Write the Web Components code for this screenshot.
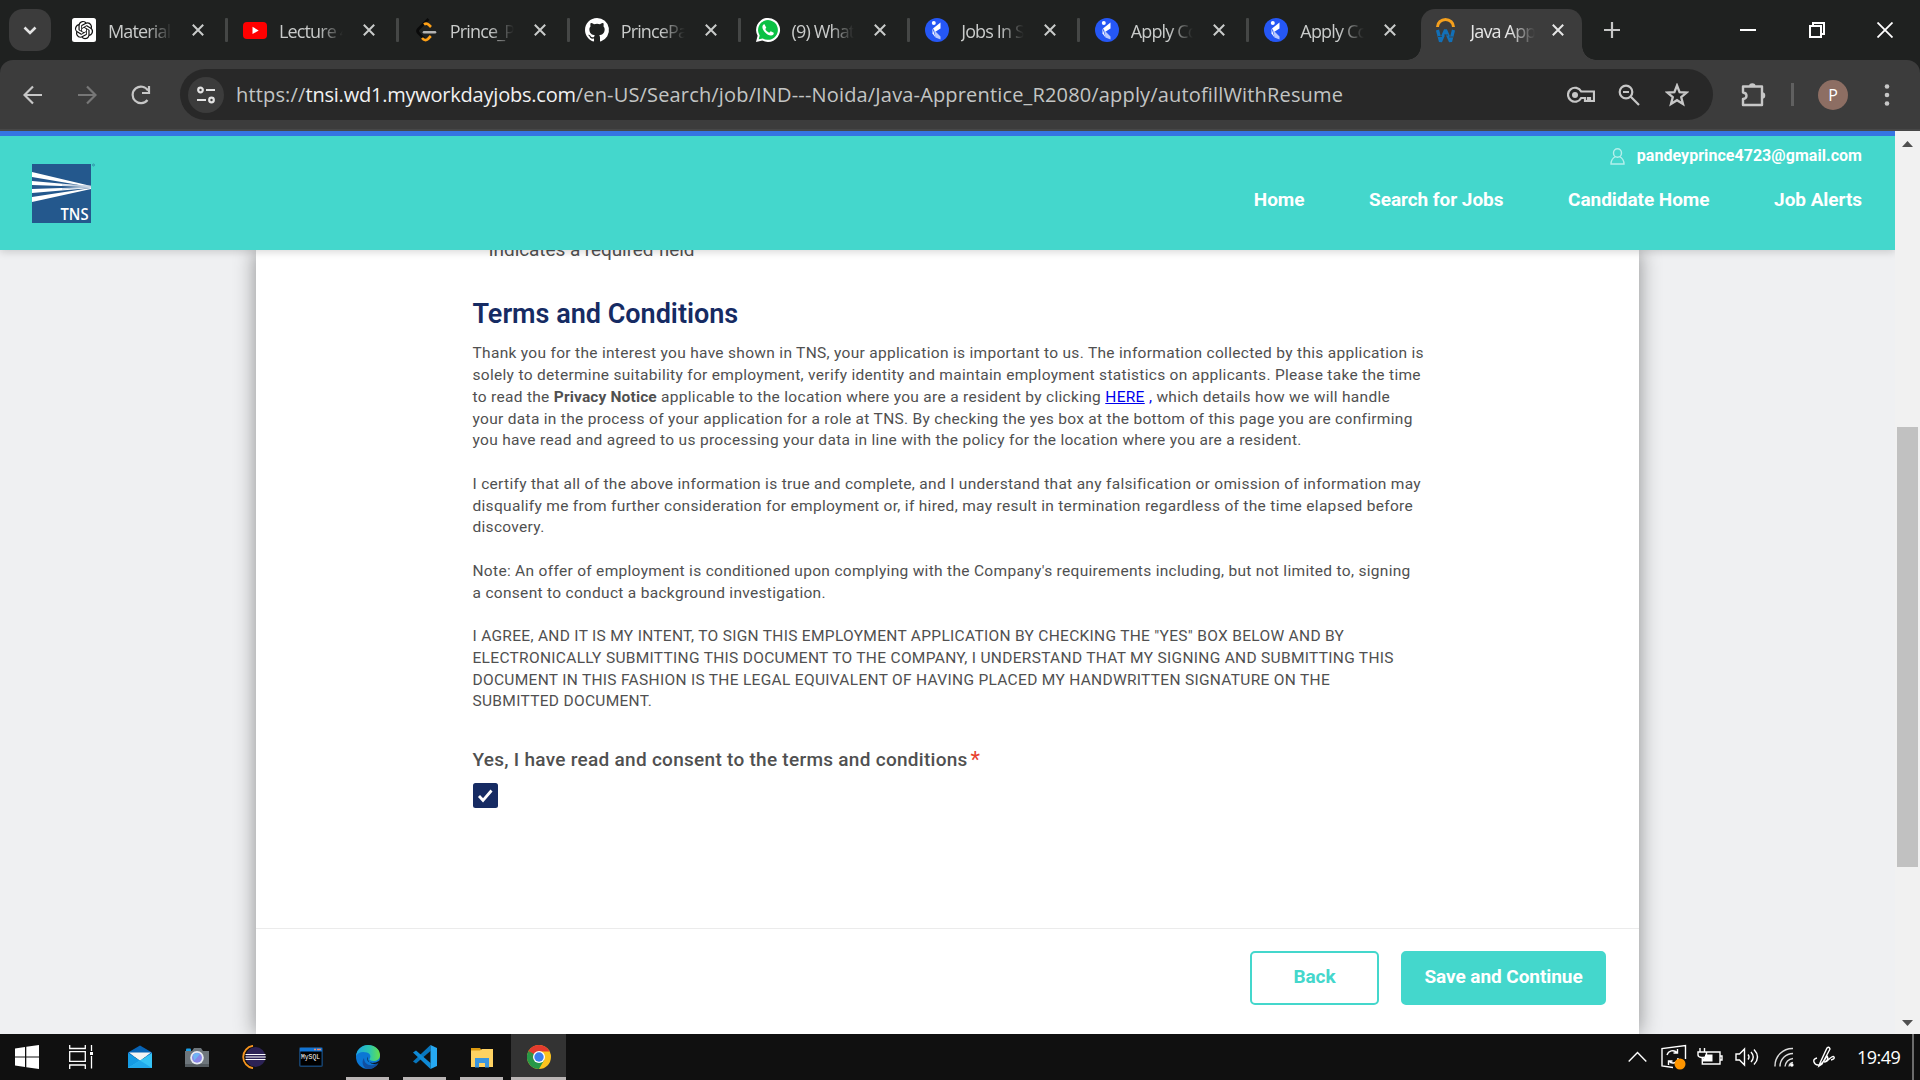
<!DOCTYPE html>
<html lang="en">
<head>
<meta charset="utf-8">
<title>Java Apprentice</title>
<style>
html,body{margin:0;height:100%;overflow:hidden}
body{display:flex;flex-direction:column;width:1920px;height:1080px;font-family:"Open Sans","Noto Sans",sans-serif}
</style>
</head>
<body>
<chrome-window></chrome-window>
<job-page></job-page>
<win-taskbar></win-taskbar>
<script>
const mk=(name,html,after)=>customElements.define(name,class extends HTMLElement{
  connectedCallback(){
    if(this.shadowRoot)return;
    const r=this.attachShadow({mode:'open'});
    const t=document.createElement('template');
    t.innerHTML=html;
    r.appendChild(t.content.cloneNode(true));
    if(after)after(this,r);
  }
});

const apna='<circle cx="12" cy="12" r="12" fill="#2557f5"/><circle cx="8.800" cy="5" r="2" fill="#fff"/><path d="M15.500 4.500v6l-5.500 3.500-2-3.500z" fill="#fff"/><path d="M9 12l6.500 6.500v3l-5-2z" fill="#b9c9ff"/><path d="M7.500 10.500l3 9-3-4z" fill="#fff"/>';
const fav={
 gpt:'<rect width="24" height="24" rx="2.500" fill="#fff"/><path transform="translate(2.900 2.900) scale(.76)" fill="#111" d="M22.2819 9.8211a5.9847 5.9847 0 0 0-.5157-4.9108 6.0462 6.0462 0 0 0-6.5098-2.9A6.0651 6.0651 0 0 0 4.9807 4.1818a5.9847 5.9847 0 0 0-3.9977 2.9 6.0462 6.0462 0 0 0 .7427 7.0966 5.98 5.98 0 0 0 .511 4.9107 6.051 6.051 0 0 0 6.5146 2.9001A5.9847 5.9847 0 0 0 13.2599 24a6.0557 6.0557 0 0 0 5.7718-4.2058 5.9894 5.9894 0 0 0 3.9977-2.9001 6.0557 6.0557 0 0 0-.7475-7.0729zm-9.022 12.6081a4.4755 4.4755 0 0 1-2.8764-1.0408l.1419-.0804 4.7783-2.7582a.7948.7948 0 0 0 .3927-.6813v-6.7369l2.02 1.1686a.071.071 0 0 1 .038.052v5.5826a4.504 4.504 0 0 1-4.4945 4.4944zm-9.6607-4.1254a4.4708 4.4708 0 0 1-.5346-3.0137l.142.0852 4.783 2.7582a.7712.7712 0 0 0 .7806 0l5.8428-3.3685v2.3324a.0804.0804 0 0 1-.0332.0615L9.74 19.9502a4.4992 4.4992 0 0 1-6.1408-1.6464zM2.3408 7.8956a4.485 4.485 0 0 1 2.3655-1.9728V11.6a.7664.7664 0 0 0 .3879.6765l5.8144 3.3543-2.0201 1.1685a.0757.0757 0 0 1-.071 0l-4.8303-2.7865A4.504 4.504 0 0 1 2.3408 7.872zm16.5963 3.8558L13.1038 8.364 15.1192 7.2a.0757.0757 0 0 1 .071 0l4.8303 2.7913a4.4944 4.4944 0 0 1-.6765 8.1042v-5.6772a.79.79 0 0 0-.407-.667zm2.0107-3.0231l-.142-.0852-4.7735-2.7818a.7759.7759 0 0 0-.7854 0L9.409 9.2297V6.8974a.0662.0662 0 0 1 .0284-.0615l4.8303-2.7866a4.4992 4.4992 0 0 1 6.6802 4.66zM8.3065 12.863l-2.02-1.1638a.0804.0804 0 0 1-.038-.0567V6.0742a4.4992 4.4992 0 0 1 7.3757-3.4537l-.142.0805L8.704 5.459a.7948.7948 0 0 0-.3927.6813zm1.0976-2.3654l2.602-1.4998 2.6069 1.4998v2.9994l-2.5974 1.4997-2.6067-1.4997Z"/>',
 yt:'<rect x="0" y="4" width="24" height="17" rx="4" fill="#f00"/><path d="M9.500 8.800v7.200l6.200-3.600z" fill="#fff"/>',
 lc:'<path d="M14.500 1L4.500 11q-2 2 0 4l6 6.200" fill="none" stroke="#0a0a0a" stroke-width="2.600"/><path d="M10 6.500q2.500-2 5 .5l2 2M8 20q3 3.600 6 1l2.800-3" fill="none" stroke="#ffa116" stroke-width="2.600"/><path d="M10 14.300h11" stroke="#b3b3b3" stroke-width="2.600" stroke-linecap="round"/>',
 gh:'<path fill="#fff" d="M12 0C5.370 0 0 5.370 0 12c0 5.310 3.440 9.800 8.200 11.390.6.110.82-.26.82-.58v-2.230c-3.340.73-4.030-1.420-4.030-1.420-.55-1.390-1.340-1.760-1.340-1.760-1.080-.74.090-.73.090-.73 1.200.090 1.840 1.240 1.840 1.240 1.070 1.830 2.800 1.300 3.490 1 .1-.78.420-1.310.76-1.610-2.670-.3-5.470-1.330-5.470-5.930 0-1.310.47-2.380 1.240-3.220-.13-.3-.54-1.520.1-3.180 0 0 1.010-.32 3.300 1.230a11.500 11.500 0 0 1 6.020 0c2.280-1.550 3.290-1.230 3.290-1.230.64 1.660.24 2.880.12 3.180.77.840 1.230 1.910 1.230 3.220 0 4.610-2.800 5.620-5.480 5.920.42.360.81 1.100.81 2.220v3.290c0 .32.190.7.800.58A12 12 0 0 0 12 0"/>',
 wa:'<path d="M0 24l1.600-6.200A12 12 0 1 1 6.400 22.500z" fill="#fff"/><path d="M2.700 21.300l1-3.900a9.900 9.900 0 1 1 3.100 3z" fill="#0bc144"/><path d="M8.500 6.200c-.8-.3-2.100.9-2.100 2.700 0 3.300 4.700 8.600 8.600 8.600 1.900 0 3.100-1.300 2.700-2.700l-3-1.500-1.500 1.500c-1.600-.5-3.300-2.200-3.900-3.700l1-1.400z" fill="#fff"/>',
 ap:apna,
 wd:'<path d="M1.500 9a8 7.500 0 0 1 16 0" fill="none" stroke="#f5a01d" stroke-width="3"/><path d="M1.500 12l3 11.500 5-11.500 5 11.500 3-11.500" fill="none" stroke="#1270b8" stroke-width="3.200" stroke-linejoin="bevel"/><path d="M2 18.500h4M8 17h4M13 19h4" stroke="#3c3c3c" stroke-width=".8"/>'
};

mk('browser-tab',`<style>
:host{display:flex;align-items:center;width:170.900px;height:60px;box-sizing:border-box;color:#c9cbca;position:relative;flex:none}
:host([narrow]){width:169.600px}
svg.f{width:24px;height:24px;margin-left:15px;flex:none;overflow:visible}
.t{width:65px;margin-left:12px;overflow:hidden;white-space:nowrap;font-size:18px;letter-spacing:-.85px;line-height:26px;margin-top:2px;-webkit-mask-image:linear-gradient(90deg,#000 62%,transparent)}
.x{width:12px;height:12px;margin-left:20px;flex:none}
.s{width:3px;height:24px;background:#454746;border-radius:1px;margin-left:21px}
:host([last]) .s{visibility:hidden}
:host([active]){height:51px;margin-top:9px;width:161px;background:#3c3c3c;border-radius:14px 14px 0 0;color:#e6e6e6;padding-bottom:9px;margin-left:1px}
:host([active]) .s{display:none}
:host([active]) .t{margin-left:10px}
:host([active]) .x{margin-left:17px}
:host([active])::before,:host([active])::after{content:"";position:absolute;bottom:0;width:14px;height:14px}
:host([active])::before{left:-14px;background:radial-gradient(circle at 0 0,transparent 13.500px,#3c3c3c 14px)}
:host([active])::after{right:-14px;background:radial-gradient(circle at 100% 0,transparent 13.500px,#3c3c3c 14px)}
</style><svg class="f" viewBox="0 0 24 24"></svg><div class="t"><slot></slot></div>
<svg class="x" viewBox="0 0 12 12"><path d="M.8.8l10.400 10.400M11.200.8L.8 11.200" stroke="currentColor" stroke-width="2"/></svg><div class="s"></div>`,
(h,r)=>{r.querySelector('.f').innerHTML=fav[h.getAttribute('icon')]});

mk('tab-strip',`<style>
:host{display:flex;height:60px;background:#1f2120;align-items:center}
.d{width:42px;height:42px;border-radius:14px;background:#3c3c3c;margin-left:9px;margin-right:6px;display:flex;align-items:center;justify-content:center;flex:none}
.p{margin-left:22px;width:16px;height:16px;flex:none}
.w{display:flex;margin-left:auto;align-items:center;padding-right:27px;gap:52.500px}
svg{display:block}
</style>
<div class="d"><svg width="14" height="9" viewBox="0 0 14 9"><path d="M1.500 1.500L7 7l5.500-5.500" stroke="#e3e3e3" stroke-width="2.600" fill="none"/></svg></div>
<browser-tab icon="gpt">Material Design</browser-tab><browser-tab icon="yt">Lecture 4 -</browser-tab><browser-tab icon="lc">Prince_Pandey</browser-tab><browser-tab icon="gh">PrincePandey</browser-tab><browser-tab icon="wa" narrow>(9) WhatsApp</browser-tab><browser-tab icon="ap" narrow>Jobs In Sales</browser-tab><browser-tab icon="ap" narrow>Apply Conte</browser-tab><browser-tab icon="ap" narrow last style="width:171px">Apply Conte</browser-tab><browser-tab icon="wd" active>Java Apprentice</browser-tab>
<svg class="p" viewBox="0 0 16 16"><path d="M8 0v16M0 8h16" stroke="#c7c7c7" stroke-width="2.200"/></svg>
<div class="w"><svg width="16" height="16"><path d="M0 8h16" stroke="#fff" stroke-width="2"/></svg>
<svg width="16" height="16" viewBox="0 0 16 16"><path d="M1 4h11v11H1zM4 4V1h11v11h-3" fill="none" stroke="#fff" stroke-width="2"/></svg>
<svg width="16" height="16" viewBox="0 0 16 16"><path d="M.5.5l15 15M15.500.5l-15 15" stroke="#fff" stroke-width="1.800"/></svg></div>`);

mk('address-bar',`<style>
:host{display:flex;height:71px;box-sizing:border-box;align-items:center;background:#3c3c3c;border-bottom:2px solid #474747;border-radius:13px 13px 0 0;color:#c7c7c7}
svg{display:block;flex:none;fill:none;stroke:currentColor;stroke-width:2.200}
.n{display:flex;align-items:center;gap:34px;padding-left:23px;width:157px;box-sizing:content-box}
.o{display:flex;align-items:center;width:1533px;height:51px;border-radius:26px;background:#282828;flex:none}
.c{width:36px;height:36px;border-radius:50%;background:#3c3c3c;margin-left:8px;display:flex;align-items:center;justify-content:center;color:#e3e3e3;flex:none}
.u{margin-left:12px;font-size:20px;white-space:nowrap;color:#c3c5c4;letter-spacing:.16px;line-height:30px}
.u b{font-weight:400;color:#f1f1f1;letter-spacing:-.22px}
.i{display:flex;align-items:center;gap:23px;margin-left:auto;padding-right:24px}
.e{display:flex;align-items:center;margin-left:28px}
.a{width:30px;height:30px;border-radius:50%;background:#8d6e63;color:#fff;text-align:center;font-size:16px;line-height:30px;margin-left:24px}
.l{width:3px;height:23px;background:#606060;margin-left:25px}
</style>
<div class="n"><svg width="20" height="20" viewBox="0 0 20 20"><path d="M19 10H2M10 1.500L1.500 10l8.500 8.500"/></svg>
<svg width="20" height="20" viewBox="0 0 20 20" style="color:#777"><path d="M1 10h17M10 1.500l8.500 8.500-8.500 8.500"/></svg>
<svg width="20" height="20" viewBox="0 0 20 20"><path d="M16.500 15A8.300 8.300 0 1 1 17 5.500M18 1v7h-7"/></svg></div>
<div class="o"><div class="c"><svg width="18" height="18" viewBox="0 0 18 18"><circle cx="3.500" cy="4" r="2.300"/><path d="M9 4h9M0 14h9"/><circle cx="14.500" cy="14" r="2.300"/></svg></div>
<div class="u">https://<b>tnsi.wd1.myworkdayjobs.com</b>/en-US/Search/job/IND---Noida/Java-Apprentice_R2080/apply/autofillWithResume</div>
<div class="i"><svg width="28" height="18" viewBox="0 0 28 18"><path d="M14.200 5.500A7 7 0 1 0 14.200 12H18v3h3v-3h2v3h4V5.500z"/><circle cx="8" cy="9" r="3" fill="currentColor" stroke="none"/></svg>
<svg width="22" height="22" viewBox="0 0 22 22"><circle cx="8" cy="8" r="6.300"/><path d="M12.800 12.800L21 21M5 8h6"/></svg>
<svg width="24" height="24" viewBox="0 0 24 24" style="margin-left:2px"><path d="M12 2.500l2.600 6.700 7 .4-5.400 4.500 1.800 6.900-6-3.800-6 3.800 1.800-6.900L2.400 9.600l7-.4z" stroke-width="2.300"/></svg></div></div>
<div class="e"><svg width="25" height="25" viewBox="0 0 25 25"><path d="M2 4.500h19V23H2v-6q3.500-.5 3.500-3.300T2 10.500z" stroke-linejoin="round" stroke-width="2.400"/><path d="M8 4.500a3.300 3.300 0 0 1 6.600 0zM21 10.300a3.200 3.200 0 0 1 0 6.500z" fill="currentColor" stroke="none"/></svg><div class="l"></div><div class="a">P</div>
<svg width="6" height="22" viewBox="0 0 6 22" style="margin-left:36px"><g fill="currentColor" stroke="none"><circle cx="3" cy="2.500" r="2.300"/><circle cx="3" cy="11" r="2.300"/><circle cx="3" cy="19.500" r="2.300"/></g></svg></div>`);

mk('chrome-window',`<style>:host{display:flex;flex-direction:column;height:131px;flex:none;background:#1f2120}</style><tab-strip></tab-strip><address-bar></address-bar>`);

mk('tns-logo',`<style>:host{display:block;width:63px;height:59px}svg{display:block;overflow:visible}</style>
<svg width="63" height="59" viewBox="0 0 63 59"><rect width="59" height="59" fill="#24588d"/><g fill="#fff"><path d="M0 8v5l59 10v-1zM0 17v4l59 2v-.8zM0 25v4l59-5v-1zM0 33v5l59-13v-1z"/></g><path d="M30 21l29 1M30 25l29-2" stroke="#a9bdd3" stroke-width=".8"/><text x="28.500" y="56" font-family="Open Sans,sans-serif" font-size="17" font-weight="600" fill="#fff" textLength="28" lengthAdjust="spacingAndGlyphs">TNS</text><circle cx="61.500" cy="1" r="1" fill="none" stroke="#24588d" stroke-width=".5"/></svg>`);

mk('site-header',`<style>
:host{display:flex;height:119px;box-sizing:border-box;border-top:5px solid #3574e2;background:#44d7cc;box-shadow:0 2px 8px rgba(0,0,0,.16);padding:28px 33px 0 32px;justify-content:space-between;color:#fff;font-family:Roboto,sans-serif;font-weight:700;position:relative;z-index:2}
.r{display:flex;flex-direction:column;align-items:flex-end;margin-top:-18px}
.m{display:flex;align-items:center;gap:12px;font-size:16px;line-height:20px;letter-spacing:.04px}
nav{display:flex;gap:64.600px;font-size:19px;line-height:24px;margin-top:22px;letter-spacing:-.05px}
</style><tns-logo></tns-logo><div class="r"><div class="m"><svg width="15" height="17" viewBox="0 0 15 17" fill="none" stroke="#b4efeb" stroke-width="1.400"><ellipse cx="7.500" cy="5" rx="4" ry="4.300"/><path d="M5.500 8.500Q1 11 1 16h13q0-5-4.500-7.500"/></svg><span>pandeyprince4723@gmail.com</span></div>
<nav><span>Home</span><span>Search for Jobs</span><span>Candidate Home</span><span>Job Alerts</span></nav></div>`);

mk('terms-text',`<style>
:host{display:block;font-size:15.500px;line-height:21.740px;color:#505050;white-space:nowrap;letter-spacing:.305px}
p{margin:0 0 21.740px}a,i{color:#00e;font-style:normal}b{letter-spacing:.15px}
h2{font-size:27px;line-height:32px;font-weight:600;color:#162b63;margin:0 0 13.700px;letter-spacing:0}
</style><h2>Terms and Conditions</h2>
<p>Thank you for the interest you have shown in TNS, your application is important to us. The information collected by this application is<br>solely to determine suitability for employment, verify identity and maintain employment statistics on applicants. Please take the time<br>to read the <b>Privacy Notice</b> applicable to the location where you are a resident by clicking <a href="#">HERE</a><i> ,</i> which details how we will handle<br>your data in the process of your application for a role at TNS. By checking the yes box at the bottom of this page you are confirming<br>you have read and agreed to us processing your data in line with the policy for the location where you are a resident.</p>
<p>I certify that all of the above information is true and complete, and I understand that any falsification or omission of information may<br>disqualify me from further consideration for employment or, if hired, may result in termination regardless of the time elapsed before<br>discovery.</p>
<p>Note: An offer of employment is conditioned upon complying with the Company's requirements including, but not limited to, signing<br>a consent to conduct a background investigation.</p>
<p>I AGREE, AND IT IS MY INTENT, TO SIGN THIS EMPLOYMENT APPLICATION BY CHECKING THE "YES" BOX BELOW AND BY<br>ELECTRONICALLY SUBMITTING THIS DOCUMENT TO THE COMPANY, I UNDERSTAND THAT MY SIGNING AND SUBMITTING THIS<br>DOCUMENT IN THIS FASHION IS THE LEGAL EQUIVALENT OF HAVING PLACED MY HANDWRITTEN SIGNATURE ON THE<br>SUBMITTED DOCUMENT.</p>`);

mk('consent-field',`<style>
:host{display:block;padding-top:13px}
.l{font-size:19px;font-weight:500;color:#505050;line-height:24px;letter-spacing:.28px;white-space:nowrap;display:flex;gap:3px}
.l i{color:#e8422f;font-style:normal;font-size:22px;font-weight:400}
.c{width:25px;height:25px;background:#162b63;border-radius:2.500px;margin-top:11px}
svg{display:block}
</style><div class="l"><span>Yes, I have read and consent to the terms and conditions</span><i>*</i></div>
<div class="c"><svg width="25" height="25" viewBox="0 0 25 25"><path d="M6 13l4 4.300L18.500 7.500" fill="none" stroke="#fff" stroke-width="2.800"/></svg></div>`);

mk('page-button',`<style>
:host{display:flex;box-sizing:border-box;height:54px;width:129px;border:2px solid #44d7cc;border-radius:5px;align-items:center;justify-content:center;font-weight:700;font-size:19px;color:#44d7cc;padding-bottom:3px;letter-spacing:-.06px}
:host([primary]){background:#44d7cc;color:#fff;width:205px}
</style><slot></slot>`);

mk('form-card',`<style>
:host{display:flex;flex-direction:column;width:1383px;height:784px;background:#fff;margin-left:256px;box-shadow:0 0 20px rgba(0,0,0,.42);box-sizing:border-box;font-family:Roboto,sans-serif}
.b{padding:0 216.500px;height:678px;box-sizing:border-box}
.q{font-size:19px;line-height:24px;margin-top:-12px;color:#505050;margin-bottom:35.800px;letter-spacing:-.07px;display:flex}
.q span{width:16px;margin-top:-5px}
.f{border-top:1px solid #ebebeb;display:flex;justify-content:flex-end;gap:22px;padding:22px 33px}
</style><div class="b"><div class="q"><span>*</span>Indicates a required field</div><terms-text></terms-text><consent-field></consent-field></div>
<div class="f"><page-button>Back</page-button><page-button primary>Save and Continue</page-button></div>`);

mk('scroll-bar',`<style>
:host{display:flex;flex-direction:column;align-items:center;width:25px;background:#f1f1f1;flex:none}
svg{display:block}.t{width:21px;height:440px;background:#c1c1c1;margin-top:280px}
.d{margin-top:auto;margin-bottom:8px}.u{margin-top:10px}
</style><svg class="u" width="11" height="6"><path d="M0 6L5.500 0 11 6z" fill="#505050"/></svg><div class="t"></div><svg class="d" width="11" height="6"><path d="M0 0l5.500 6L11 0z" fill="#505050"/></svg>`);

mk('job-page',`<style>
:host{display:flex;height:903px;flex:none}
main{width:1895px;height:903px;background:#eff0f2;overflow:hidden;flex:none}
</style><main><site-header></site-header><form-card></form-card></main><scroll-bar></scroll-bar>`);

mk('task-icon',`<style>
:host{display:flex;width:57px;height:46px;box-sizing:border-box;align-items:center;justify-content:center;flex:none;position:relative}
::slotted(svg){display:block;width:24px;height:24px}
:host([open])::after{content:"";position:absolute;left:7px;right:7px;bottom:0;height:3px;background:#bab5b5}
:host([active]){background:#333}
:host([active])::after{left:0;right:0}
</style><slot></slot>`);

mk('win-taskbar',`<style>
:host{display:flex;height:46px;background:#101010;flex:none;align-items:center;color:#fff}
.t{display:flex;align-items:center;margin-left:auto;height:46px}
.t svg{display:block;fill:none;stroke:#fff;stroke-width:1.400}
.k{font-size:18px;letter-spacing:-.5px;width:46px;margin-left:22px;white-space:nowrap}
.v{width:2px;height:46px;background:#6c6c6c;margin-left:9px;margin-right:6px}
</style>
<task-icon style="width:54px"><svg viewBox="0 0 24 24"><path d="M0 3.500L10 2v9.500H0zM11.300 1.800L24 0v11.500H11.300zM0 12.600h10V22L0 20.500zM11.300 12.600H24V24l-12.700-1.800z" fill="#fff"/></svg></task-icon>
<task-icon style="width:54px"><svg viewBox="0 0 24 24" fill="none" stroke="#fff" stroke-width="1.300"><path d="M.7 0v3.500h15.600V0M.7 6.700h15.600v9.600H.7zM.7 24v-4h15.600v4M22.500 0v6M22.500 11v12.500"/><path d="M21 7h3v3h-3z" fill="#fff" stroke="none"/></svg></task-icon>
<task-icon style="margin-left:3px"><svg viewBox="0 0 24 24"><path d="M0 7.500L12 .5l12 7V12H0z" fill="#0763b5"/><path d="M1 7.500h22L12 16z" fill="#f4f4f4"/><path d="M0 8l24 15H0z" fill="#159be4"/><path d="M24 8L0 23h24z" fill="#36c4f6"/><path d="M12 15.500L0 23h24z" fill="#21a9ec"/></svg></task-icon>
<task-icon><svg viewBox="0 0 24 24"><rect x="1" y="3.500" width="5" height="4" rx="1" fill="#199fe8"/><path d="M0 6h7l2-3h7l2 3h6v16H0z" fill="#6e767c"/><path d="M0 19h24v3H0z" fill="#555c61"/><circle cx="12" cy="12.800" r="6.800" fill="#e8edf2"/><circle cx="12" cy="12.800" r="5" fill="#8a86e6"/><path d="M8 10a5 5 0 0 1 7-1l-6 7z" fill="#6fb4f3"/></svg></task-icon>
<task-icon><svg viewBox="0 0 24 24"><path d="M11 .8a11.300 11.300 0 0 0 0 22.400" fill="none" stroke="#f7941e" stroke-width="1.800"/><circle cx="13.500" cy="12" r="10" fill="#2c2255"/><path d="M3.500 9.500h20M3.500 12h20.300M3.500 14.500h20" stroke="#fff" stroke-width="1.100"/></svg></task-icon>
<task-icon><svg viewBox="0 0 24 24"><rect x=".8" y="2.800" width="22.400" height="18.400" rx="1" fill="#000" stroke="#17436f" stroke-width="1.500"/><path d="M1 3h22v3.500H1z" fill="#1274d4"/><path d="M15 4.500h2M18 4.500h4" stroke="#f08c6b" stroke-width="1.600"/><text x="2" y="13.500" font-family="Liberation Mono,monospace" font-size="7" fill="#fff" textLength="19" lengthAdjust="spacingAndGlyphs">MySQL</text></svg></task-icon>
<task-icon open><svg viewBox="0 0 24 24"><defs><linearGradient id="a" x1="0" x2="1"><stop offset="0" stop-color="#1aa5e6"/><stop offset=".6" stop-color="#2fc9a8"/><stop offset="1" stop-color="#67e04a"/></linearGradient></defs><circle cx="12" cy="12" r="12" fill="#0b77d5"/><path d="M0 11C1 4 6 0 12 0c7 0 12 4.500 12 10 0 4-3 6-6.500 6-3 0-4.500-1.200-4-2 2-2.500.5-5.500-2.500-6.500C6 6 2 7.500 0 11z" fill="url(#a)"/><path d="M8 13c0 5 4 8 9 7l5-2c-2 4-6 6-10 6-5-1-7-7-4-11z" fill="#114f9f"/><path d="M11.500 11.500q-1.500 6 5 6.500 3.500 0 6.800-2.200l.9 0q-2 3.400-4 3-9 1-8.700-7.300z" fill="#101010"/></svg></task-icon>
<task-icon open><svg viewBox="0 0 24 24"><path d="M17.500 0v6L3 18.500 0 16.500z" fill="#0876bd"/><path d="M0 7.500l3-2 14.500 12.500v6z" fill="#0f8ad6"/><path d="M17.500 0L24 3v18l-6.500 3z" fill="#26a8f2"/></svg></task-icon>
<task-icon open><svg viewBox="0 0 24 24"><path d="M1 3h9l2 3H1z" fill="#dc9a10"/><path d="M1 5.500h9L12 4h11v18H1z" fill="#ffd262"/><path d="M5 13h14v9.500h-4V18H9v4.500H5z" fill="#3b96df"/></svg></task-icon>
<task-icon open active style="width:55px;margin-left:1px"><svg viewBox="0 0 24 24"><circle cx="12" cy="12" r="12" fill="#fcc31e"/><path d="M12 12l5.200 3L12 24A12 12 0 0 1 1.600 6z" fill="#279847"/><path d="M1.600 6A12 12 0 0 1 22.600 6.500H12l-5.200 8.500z" fill="#e33b2e"/><path d="M1.600 6l5.200 9L12 12z" fill="#279847"/><circle cx="12" cy="12" r="6" fill="#fff"/><circle cx="12" cy="12" r="4.700" fill="#3b7ded"/></svg></task-icon>
<div class="t">
<svg width="19" height="12" viewBox="0 0 19 12"><path d="M.7 10.500l8.800-9 8.800 9"/></svg>
<svg width="26" height="26" viewBox="0 0 26 26" style="margin-left:14px"><path d="M12 23.500L1 22V4.500L24.500 1.500V15M6 11a6 6 0 0 1 10-2.500M16.500 5v4h-4M17 14a5 5 0 0 1-9 3M7.500 21v-4h4"/><circle cx="19" cy="20" r="5.500" fill="#ff9500" stroke="none"/></svg>
<svg width="26" height="20" viewBox="0 0 26 20" style="margin-left:10px"><path d="M3 1v4M7.500 1v4M1 5h8.500v3q0 2-3 2.500h-2Q1 10 1 8zM5.300 10.500V17H23V5H10M23 9h2v4h-2"/><path d="M8 7.500h7.500v7H6v-3l2-1z" fill="#fff" stroke="none"/></svg>
<svg width="25" height="20" viewBox="0 0 25 20" style="margin-left:12px"><path d="M1 7v6h3.500l5 5V2l-5 5zM13 7.500q2 2.500 0 5M16 5q4.500 5 0 10M19 2.500q7 7.500 0 15"/></svg>
<svg width="20" height="20" viewBox="0 0 20 20" style="margin-left:14px"><path d="M1 19.500A17.500 17.500 0 0 1 19 1.500M6 19.500A13 13 0 0 1 19 6.500M11 19.500q1-7 8-8M15 19.500q.5-3.500 4-4" stroke="#ddd"/><circle cx="17.800" cy="18" r="1.800" fill="#fff" stroke="none"/></svg>
<svg width="22" height="22" viewBox="0 0 22 22" style="margin-left:19px"><path d="M7 17L14 2q2-2 3 1L9 18l-3 2zM4 12q-4 1-3 4t4 3 5-3l4-6q2 3-1 5t1 0q6-6 7-4t-3 3"/></svg>
<div class="k">19:49</div><div class="v"></div></div>`);
</script>
</body>
</html>
